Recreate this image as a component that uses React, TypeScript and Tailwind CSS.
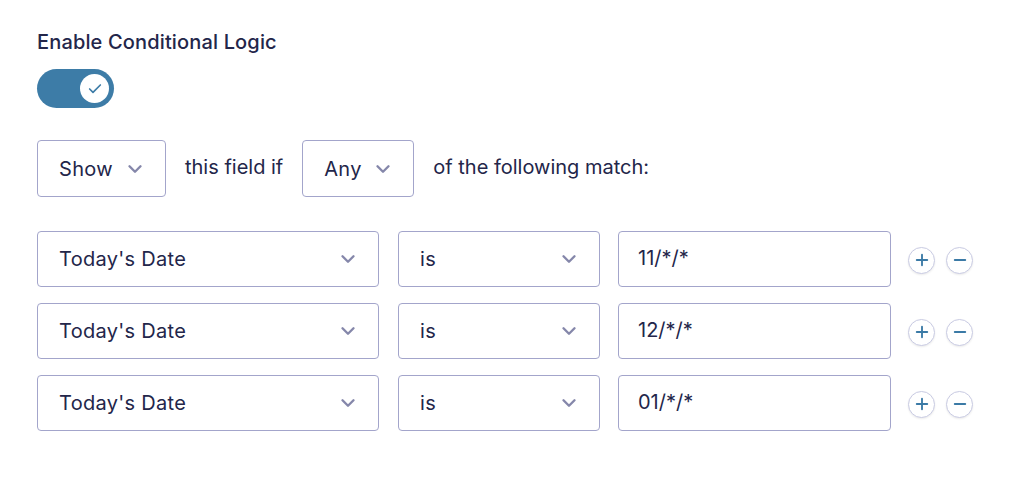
import { Check, ChevronDown, Plus, Minus } from 'lucide-react';

const rules = ['11/*/*', '12/*/*', '01/*/*'];

function Select({ value, className }: { value: string; className: string }) {
  return (
    <div
      className={`flex items-center justify-between rounded-[4px] border border-[#a3a5cb] bg-white pl-[21px] pr-[19px] text-[20px] tracking-[0.3px] text-[#23264a] ${className}`}
    >
      <span>{value}</span>
      <ChevronDown size={22} strokeWidth={2.6} className="text-[#8587aa]" />
    </div>
  );
}

function RoundButton({ children }: { children: React.ReactNode }) {
  return (
    <button className="flex h-[27px] w-[27px] items-center justify-center rounded-full border border-[#c9cbe3] bg-white text-[#3b7aa6] shadow-[0_1px_2px_rgba(0,0,0,0.08)]">
      {children}
    </button>
  );
}

export default function App() {
  return (
    <div
      className="min-h-[480px] w-[1010px] bg-white pl-[37px] pt-[30px] text-[#23264a]"
      style={{ fontFamily: 'Inter, "Noto Sans", sans-serif' }}
    >
      {/* Label */}
      <p className="text-[20px] font-medium leading-[24px] tracking-[0.15px]">Enable Conditional Logic</p>

      {/* Toggle */}
      <div className="mt-[15px] flex h-[39px] w-[77px] items-center justify-end rounded-full bg-[#3d7ca7] pr-[5px]">
        <div className="flex h-[29px] w-[29px] items-center justify-center rounded-full bg-white">
          <Check size={16} strokeWidth={2.5} className="text-[#3d7ca7]" />
        </div>
      </div>

      {/* Show / Any row */}
      <div className="mt-[32px] flex items-center text-[20px]">
        <Select value="Show" className="h-[57px] w-[129px]" />
        <span className="ml-[19px] mr-[19px] -mt-[4px]">this field if</span>
        <Select value="Any" className="h-[57px] w-[112px]" />
        <span className="ml-[19px] -mt-[4px]">of the following match:</span>
      </div>

      {/* Rules */}
      <div className="mt-[34px] flex flex-col gap-[16px]">
        {rules.map((r) => (
          <div key={r} className="flex items-center">
            <Select value="Today's Date" className="h-[56px] w-[342px]" />
            <Select value="is" className="ml-[19px] h-[56px] w-[202px]" />
            <div className="ml-[18px] flex h-[56px] w-[273px] items-center rounded-[4px] border border-[#a3a5cb] pb-[3px] pl-[19px] text-[20px]">
              {r}
            </div>
            <div className="ml-[17px] flex gap-[11px] pt-[2px]">
              <RoundButton>
                <Plus size={18} strokeWidth={2.5} />
              </RoundButton>
              <RoundButton>
                <Minus size={18} strokeWidth={2.5} />
              </RoundButton>
            </div>
          </div>
        ))}
      </div>
    </div>
  );
}
